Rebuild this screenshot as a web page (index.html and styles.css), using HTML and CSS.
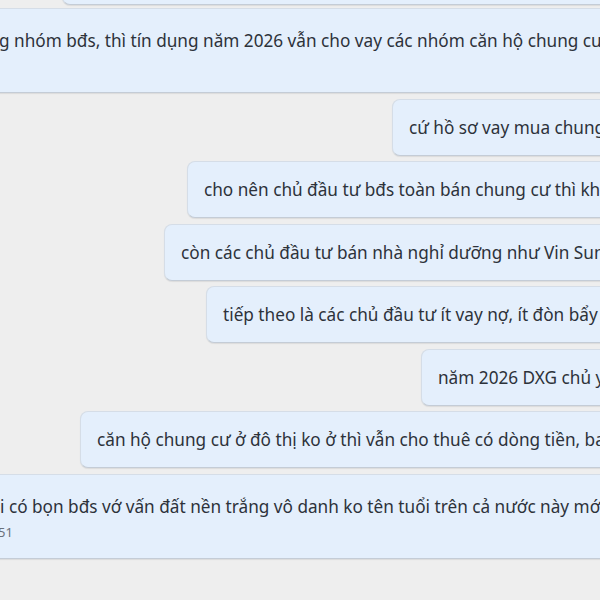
FILE: index.html
```html
<!DOCTYPE html>
<html lang="vi">
<head>
<meta charset="utf-8">
<link rel="stylesheet" href="styles.css">
</head>
<body>
<div class="chat">
  <div class="bubble mine pos-top">rồi thì lại như cũ</div>
  <div class="bubble wide first">
    <div class="text">g nhóm bđs, thì tín dụng năm 2026 vẫn cho vay các nhóm căn hộ chung cư ở đô thị</div>
  </div>
  <div class="bubble mine pos-a">cứ hồ sơ vay mua chung cư</div>
  <div class="bubble mine pos-b">cho nên chủ đầu tư bđs toàn bán chung cư thì khỏe</div>
  <div class="bubble mine pos-c">còn các chủ đầu tư bán nhà nghỉ dưỡng như Vin Sun</div>
  <div class="bubble mine pos-d">tiếp theo là các chủ đầu tư ít vay nợ, ít đòn bẩy</div>
  <div class="bubble mine pos-e">năm 2026 DXG chủ yếu</div>
  <div class="bubble mine pos-f">căn hộ chung cư ở đô thị ko ở thì vẫn cho thuê có dòng tiền, ba</div>
  <div class="bubble wide last">
    <div class="text">i có bọn bđs vớ vấn đất nền trắng vô danh ko tên tuổi trên cả nước này mới</div>
    <div class="time">51</div>
  </div>
</div>
</body>
</html>
```
FILE: styles.css
```css
html, body {
  margin: 0;
  padding: 0;
  width: 600px;
  height: 600px;
  overflow: hidden;
  background: #eeeeee;
}
body {
  font-family: "Noto Sans", "Open Sans", sans-serif;
  color: #2d323a;
}
.chat {
  display: flex;
  flex-direction: column;
  gap: 5.5px;
  margin-top: -52px;
  width: 600px;
}
.bubble {
  background: #e4effc;
  border: 1px solid #d5dde7;
  border-bottom-color: #c4ccd6;
  border-radius: 8px;
  box-shadow: 0 1px 1px rgba(0, 0, 0, 0.08);
  white-space: nowrap;
  overflow: hidden;
  font-size: 17.2px;
}
.mine {
  height: 23px;
  line-height: 23px;
  padding: 16px 16px;
  margin-right: -200px;
}
.wide {
  margin-left: -18px;
  margin-right: -200px;
  padding: 20px 16px 17px;
}
.wide .text {
  line-height: 24px;
}
.wide .time {
  font-size: 13px;
  line-height: 18px;
  margin-top: 4px;
  color: #6a717b;
}
.first {
  margin-top: -2.5px;
  padding-bottom: 39px;
}
.last .text { padding-left: 1px; }
.last .time { margin-left: -1px; }
.pos-top { margin-left: 62px; }
.pos-a { margin-left: 392px; }
.pos-b { margin-left: 187px; }
.pos-c { margin-left: 164px; }
.pos-d { margin-left: 206px; }
.pos-e { margin-left: 421px; }
.pos-f { margin-left: 80px; }
```
